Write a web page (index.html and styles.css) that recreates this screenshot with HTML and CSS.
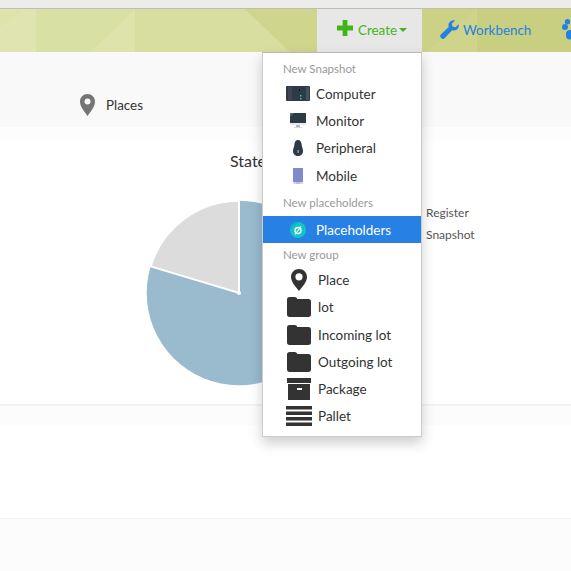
FILE: index.html
```html
<!DOCTYPE html>
<html lang="en">
<head>
  <meta charset="UTF-8" />
  <title>Inventory</title>
  <link rel="stylesheet" href="styles.css">
</head>
<body>
  <div class="top-strip"></div>

  <nav class="navbar">
    <svg class="nav-bg" width="571" height="43" viewBox="0 0 571 43">
      <rect width="571" height="43" fill="#d8dea0" />
      <polygon points="0,0 36,0 36,43 0,43" fill="#dde3ab" />
      <polygon points="0,18 24,0 36,0 36,43 0,43" fill="#dfe4b0" />
      <polygon points="36,0 135,0 90,43 36,43" fill="#d9e0a3" />
      <polygon points="90,43 135,0 135,43" fill="#dde3aa" />
      <polygon points="245,0 320,0 320,43 290,43" fill="#cfd58d" />
      <polygon points="422,0 477,0 477,43 422,43" fill="#cbd285" />
      <polygon points="425,43 477,0 477,43" fill="#ced58b" />
      <polygon points="477,0 571,0 571,43 477,43" fill="#c8cf80" />
    </svg>
    <a class="nav-link nav-create" href="#">
      <svg class="nav-icon plus" width="16" height="16" viewBox="0 0 16 16"><path d="M5.600 0h4.800v5.600H16v4.800h-5.600V16H5.600v-5.600H0V5.600h5.600z" fill="#3fb618" /></svg>
      <span class="create-label">Create</span><span class="caret"></span>
    </a>
    <a class="nav-link nav-workbench" href="#">
      <svg class="nav-icon" width="19" height="19" viewBox="0 0 19 19"><path d="M18.700 4.200c.5 2-.1 4-1.700 5.300-1.400 1.100-3.200 1.400-4.800.8L4.600 18.200c-.9.900-2.300.9-3.200.1l-.6-.6c-.9-.9-.9-2.300 0-3.200l7.900-7.600c-.6-1.700-.2-3.600 1.100-4.900C11.200.6 13.200 0 15 .5l-3.200 3.200.7 2.800 2.800.7z" fill="#2780e3" /></svg>
      Workbench
    </a>
    <span class="nav-users">
      <svg width="14" height="21" viewBox="0 0 14 21"><circle cx="5.500" cy="2.700" r="2.700" fill="#2780e3" /><circle cx="3" cy="8" r="3" fill="#2780e3" /><rect x="4" y="11" width="10" height="9.500" rx="4" fill="#2780e3" /></svg>
    </span>
  </nav>

  <main>
    <section class="places-bar">
      <svg width="15" height="22" viewBox="0 0 15 22"><path fill-rule="evenodd" d="M7.500 0C3.300 0 0 3.300 0 7.500c0 2.700 1 5 3 8.200L7.500 22 12 15.700c2-3.200 3-5.500 3-8.200C15 3.300 11.700 0 7.500 0zm0 4.500a3 3 0 1 1 0 6 3 3 0 0 1 0-6z" fill="#757575" /></svg>
      <span class="places-label">Places</span>
    </section>
    <div class="thin-band"></div>

    <section class="chart">
      <h4 class="chart-title">States</h4>
      <svg class="pie" width="190" height="190" viewBox="0 0 190 190">
        <circle cx="95" cy="95" r="92.300" fill="#9abbce" />
        <path d="M95 95V2.700A92.300 92.300 0 0 0 6.700 68.400z" fill="#dcdcdc" stroke="#fff" stroke-width="2" />
        <circle cx="95" cy="95" r="2" fill="#fff" />
      </svg>
      <ul class="legend">
        <li>Register</li>
        <li>Snapshot</li>
      </ul>
    </section>

    <div class="band band-one"></div>
    <div class="blank"></div>
    <div class="band band-two"></div>
  </main>

  <div class="menu">
    <div class="menu-header">New Snapshot</div>
    <a class="menu-item" href="#">
      <span class="ico">
        <svg width="24" height="15" viewBox="0 0 24 15"><rect width="24" height="15" rx="1" fill="#2f3a47" /><rect x="2" y="1" width="4" height="13" fill="#3b4757" /><rect x="20" y="1" width="3" height="13" fill="#465262" /><rect x="13" y="3" width="1" height="2" fill="#10151b" /><rect x="14" y="9" width="1.500" height="1.500" fill="#27c5d0" /><rect x="14" y="12" width="1.500" height="1.500" fill="#27c5d0" /></svg>
      </span>Computer
    </a>
    <a class="menu-item" href="#">
      <span class="ico">
        <svg width="16" height="15" viewBox="0 0 16 15"><rect width="16" height="10" fill="#2f3a47" /><polygon points="0,0 4,0 0,4" fill="#566272" /><rect y="10" width="16" height="2" fill="#e8e9ea" /><rect x="6" y="12" width="4" height="2" fill="#b5b9bd" /><rect x="4" y="14" width="8" height="1" fill="#d4d6d8" /></svg>
      </span>Monitor
    </a>
    <a class="menu-item" href="#">
      <span class="ico">
        <svg width="10" height="16" viewBox="0 0 10 16"><path d="M5 0c2.500 0 3.500 2 3.700 5 .1 2 1.300 3.500 1.300 6 0 3.200-2.300 5-5 5s-5-1.800-5-5c0-2.500 1.200-4 1.300-6C1.500 2 2.500 0 5 0z" fill="#2f3a47" /><rect x="4.500" y="10" width="1.500" height="3" fill="#8f98a3" /></svg>
      </span>Peripheral
    </a>
    <a class="menu-item" href="#">
      <span class="ico">
        <svg width="10" height="16" viewBox="0 0 10 16"><rect width="10" height="16" rx="1" fill="#d5d7de" /><rect width="10" height="14" fill="#7f8ccb" /><rect x="3" y="14.500" width="4" height="1" fill="#a8abb8" /></svg>
      </span>Mobile
    </a>
    <div class="menu-header header-wide">New placeholders</div>
    <a class="menu-item active" href="#">
      <span class="ico">
        <svg width="16" height="16" viewBox="0 0 16 16"><circle cx="8" cy="8" r="8" fill="#11c7c3" /><path d="M0 8a8 8 0 0 1 8-8z" fill="#0db2c9" /><circle cx="8" cy="8.500" r="3" fill="none" stroke="#fff" stroke-width="1.300" /><path d="M5 12.500 11 4.500" stroke="#fff" stroke-width="1.200" /></svg>
      </span>Placeholders
    </a>
    <div class="menu-header header-narrow">New group</div>
    <a class="menu-item group" href="#">
      <span class="ico">
        <svg width="16" height="22" viewBox="0 0 16 22"><path fill-rule="evenodd" d="M8 0C3.600 0 0 3.400 0 7.800c0 2.600 1 4.900 3 7.900L8 22l5-6.300c2-3 3-5.300 3-7.900C16 3.400 12.400 0 8 0zm0 4.200a3.600 3.600 0 1 1 0 7.200 3.600 3.600 0 0 1 0-7.200z" fill="#333" /></svg>
      </span>Place
    </a>
    <a class="menu-item group" href="#">
      <span class="ico"><svg width="24" height="20" viewBox="0 0 24 20"><path d="M2.500 0h5.300c1.200 0 2.200.8 2.400 2h11.300C23 2 24 3 24 4.500v13c0 1.400-1 2.500-2.500 2.500h-19C1 20 0 18.900 0 17.500v-15C0 1 1 0 2.500 0z" fill="#333" /></svg></span>lot
    </a>
    <a class="menu-item group" href="#">
      <span class="ico"><svg width="24" height="20" viewBox="0 0 24 20"><path d="M2.500 0h5.300c1.200 0 2.200.8 2.400 2h11.300C23 2 24 3 24 4.500v13c0 1.400-1 2.500-2.500 2.500h-19C1 20 0 18.900 0 17.500v-15C0 1 1 0 2.500 0z" fill="#333" /></svg></span>Incoming lot
    </a>
    <a class="menu-item group" href="#">
      <span class="ico"><svg width="24" height="20" viewBox="0 0 24 20"><path d="M2.500 0h5.300c1.200 0 2.200.8 2.400 2h11.300C23 2 24 3 24 4.500v13c0 1.400-1 2.500-2.500 2.500h-19C1 20 0 18.900 0 17.500v-15C0 1 1 0 2.500 0z" fill="#333" /></svg></span>Outgoing lot
    </a>
    <a class="menu-item group" href="#">
      <span class="ico"><svg width="24" height="22" viewBox="0 0 24 22"><rect width="24" height="5" fill="#333" /><rect x="1" y="6" width="22" height="16" fill="#333" /><rect x="10" y="10" width="5" height="2" fill="#fff" /></svg></span>Package
    </a>
    <a class="menu-item group" href="#">
      <span class="ico"><svg width="26" height="20" viewBox="0 0 26 20"><rect width="26" height="3.500" fill="#333" /><rect y="5.500" width="26" height="3.500" fill="#333" /><rect y="11" width="26" height="3.500" fill="#333" /><rect y="16.500" width="26" height="3.500" fill="#333" /></svg></span>Pallet
    </a>
  </div>
</body>
</html>
```

FILE: styles.css
```css
html, body { height: 571px; overflow: hidden; }
body { margin: 0; font-family: Lato, "Open Sans", sans-serif; font-size: 13.400px; color: #333; background: #fff; position: relative; }
a { text-decoration: none; color: inherit; }

.top-strip { height: 8px; background: #ececea; border-bottom: 1px solid #bdbdb9; }

/* navbar */
.navbar { height: 43px; position: relative; display: flex; align-items: stretch; padding-left: 317px; overflow: hidden; white-space: nowrap; }
.nav-bg { position: absolute; left: 0; top: 0; }
.nav-link { position: relative; flex: none; display: flex; align-items: center; box-sizing: border-box; padding-bottom: 2px; }
.nav-create { width: 105px; padding-left: 20px; background: #e7e7e7; color: #3fb618; }
.nav-icon { flex: none; }
.plus { margin-bottom: 4px; }
.create-label { margin-left: 5px; }
.caret { width: 0; height: 0; margin-left: 2px; border-top: 4px solid #3fb618; border-left: 4px solid transparent; border-right: 4px solid transparent; }
.nav-workbench { margin-left: 18px; color: #2780e3; gap: 4px; }
.nav-users { position: relative; flex: none; margin-left: 31px; margin-top: 10px; display: flex; align-self: flex-start; }

/* page bands */
.places-bar { height: 75px; background: #f9f9f9; display: flex; align-items: center; padding: 31px 0 0 80px; box-sizing: border-box; }
.places-label { margin-left: 11px; }
.thin-band { height: 14px; background: #fdfdfd; }

.chart { height: 263px; position: relative; }
.chart-title { margin: 0; padding: 10px 0 0 230px; font-size: 16px; font-weight: 400; line-height: 20px; }
.pie { position: absolute; left: 144px; top: 57px; }
.legend { position: absolute; left: 426px; top: 61px; margin: 0; padding: 0; list-style: none; font-size: 12px; color: #555; line-height: 22px; }

.band { background: #fcfcfc; border-top: 2px solid #f3f3f3; }
.band-one { height: 19px; }
.blank { height: 93px; }
.band-two { height: 60px; border-top-width: 1px; }

/* dropdown */
.menu { position: absolute; left: 262px; top: 52px; width: 160px; height: 385px; box-sizing: border-box; padding-top: 7px; background: #fff; border: 1px solid #ccc; border-top-color: #b9b9b0; box-shadow: 0 6px 12px rgba(0, 0, 0, 0.2); }
.menu-header { height: 20px; line-height: 18px; padding-left: 20px; font-size: 11.500px; color: #999; }
.header-wide { margin: 5px 0 1.800px; }
.header-narrow { margin-top: 3px; }
.menu-item { height: 27.300px; display: flex; align-items: center; font-size: 13.500px; color: #333; }
.menu-item.active { background: #2780e3; color: #fff; }
.ico { width: 53px; flex: none; display: flex; align-items: center; justify-content: center; padding-left: 16px; box-sizing: border-box; }
.group .ico { width: 55px; }
```
